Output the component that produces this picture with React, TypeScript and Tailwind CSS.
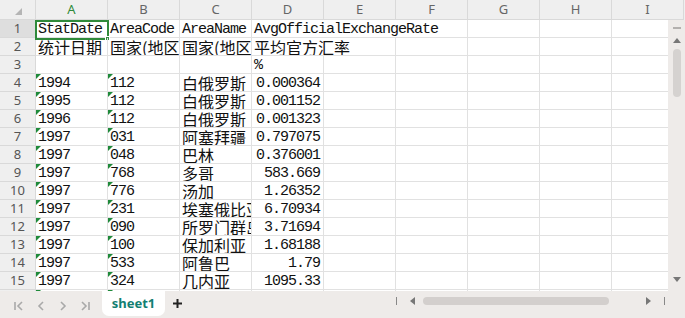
import React from "react";

type Cell = { v: string; zh?: boolean; num?: boolean; tri?: boolean; span?: 1 | 2 | 3 };

const COLS = ["A", "B", "C", "D", "E", "F", "G", "H", "I"];
const SPAN_W: Record<number, string> = { 1: "w-[72px]", 2: "w-[144px]", 3: "w-[216px]" };

const body: [string, string, string, string][] = [
  ["1994", "112", "白俄罗斯", "0.000364"],
  ["1995", "112", "白俄罗斯", "0.001152"],
  ["1996", "112", "白俄罗斯", "0.001323"],
  ["1997", "031", "阿塞拜疆", "0.797075"],
  ["1997", "048", "巴林", "0.376001"],
  ["1997", "768", "多哥", "583.669"],
  ["1997", "776", "汤加", "1.26352"],
  ["1997", "231", "埃塞俄比亚", "6.70934"],
  ["1997", "090", "所罗门群岛", "3.71694"],
  ["1997", "100", "保加利亚", "1.68188"],
  ["1997", "533", "阿鲁巴", "1.79"],
  ["1997", "324", "几内亚", "1095.33"],
  ["1997", "", "", ""],
];

const ROWS: Cell[][] = [
  [{ v: "StatDate" }, { v: "AreaCode" }, { v: "AreaName" }, { v: "AvgOfficialExchangeRate", span: 3 }],
  [
    { v: "统计日期", zh: true },
    { v: "国家(地区)代码", zh: true },
    { v: "国家(地区)名称", zh: true },
    { v: "平均官方汇率", zh: true, span: 2 },
  ],
  [{ v: "" }, { v: "" }, { v: "" }, { v: "%" }],
  ...body.map((r, i) =>
    i === 12
      ? [{ v: "", tri: true }, { v: "", tri: true }, { v: "" }, { v: "" }]
      : [
          { v: r[0], tri: true },
          { v: r[1], tri: true },
          { v: r[2], zh: true },
          { v: r[3], num: true },
        ]
  ),
];

function GridCell({ cell }: { cell: Cell }) {
  const w = SPAN_W[cell.span ?? 1];
  const font = cell.zh
    ? "text-[16px] leading-[17px] pt-[1px] font-['Noto_Sans_CJK_SC',sans-serif]"
    : "text-[15px] leading-[17px] pt-[1px] tracking-[-1px] font-['Liberation_Mono','Noto_Sans_CJK_SC',monospace]";
  return (
    <div
      className={`relative shrink-0 h-[18px] border-r border-b border-[#e1e1e1] overflow-hidden whitespace-nowrap text-[#111] ${w} ${font} ${
        cell.num ? "text-right pr-[3px]" : "pl-[2px]"
      }`}
    >
      {cell.tri && (
        <span className="absolute top-0 left-0 w-0 h-0 border-t-[5px] border-t-[#1f8a3a] border-r-[5px] border-r-transparent" />
      )}
      {cell.v}
    </div>
  );
}

function Row({ n, cells }: { n: number; cells: Cell[] }) {
  const out: React.ReactNode[] = [];
  let col = 0;
  cells.forEach((c, i) => {
    out.push(<GridCell key={i} cell={c} />);
    col += c.span ?? 1;
  });
  for (; col < COLS.length; col++) out.push(<GridCell key={"e" + col} cell={{ v: "" }} />);
  return (
    <div className="flex h-[18px]">
      <div
        className={`shrink-0 w-[36px] h-[18px] border-r border-b border-[#d9d9d9] flex items-center justify-center text-[13px] text-[#555] font-['Noto_Sans',sans-serif] ${
          n === 1 ? "bg-[#dedede]" : "bg-[#efefef]"
        }`}
      >
        {n}
      </div>
      {out}
      {n === 1 && (
        <div className="absolute left-[35px] top-[20px] w-[74px] h-[20px] border-2 border-[#2f8a3a] pointer-events-none">
          <span className="absolute -right-[3px] -bottom-[3px] w-[5px] h-[5px] bg-[#2f8a3a] border border-white" />
        </div>
      )}
    </div>
  );
}

function Tri({ dir }: { dir: "up" | "down" | "left" | "right" }) {
  const pts = {
    up: "0,6 4,1 8,6",
    down: "0,1 8,1 4,6",
    left: "6,0 6,8 1,4",
    right: "1,0 1,8 6,4",
  }[dir];
  return (
    <svg width="8" height="8" viewBox="0 0 8 8">
      <polygon points={pts} fill="#777" />
    </svg>
  );
}

function Nav({ d }: { d: string }) {
  return (
    <svg width="12" height="12" viewBox="0 0 12 12" fill="none" stroke="#a9a9a9" strokeWidth="1.6">
      <path d={d} />
    </svg>
  );
}

export default function App() {
  return (
    <div className="w-[685px] h-[318px] overflow-hidden bg-white flex flex-col select-none">
      <div className="relative h-[291px] overflow-hidden flex flex-col">
        {/* column headers */}
        <div className="flex h-[20px] shrink-0 bg-[#efefef]">
          <div className="relative shrink-0 w-[36px] h-[20px] border-r border-b border-[#d9d9d9]">
            <svg className="absolute left-[15px] top-[8px]" width="7" height="7" viewBox="0 0 7 7">
              <polygon points="7,0 7,7 0,7" fill="#b5b5b5" />
            </svg>
          </div>
          {COLS.map((c) => (
            <div
              key={c}
              className={`shrink-0 w-[72px] h-[20px] border-r border-b border-[#d9d9d9] flex items-center justify-center text-[13px] font-['Noto_Sans',sans-serif] ${
                c === "A" ? "text-[#2f8a3a]" : "text-[#666]"
              }`}
            >
              {c}
            </div>
          ))}
        </div>
        <div className="flex flex-1 min-h-0">
          <div className="w-[668px] overflow-hidden">
            {ROWS.map((r, i) => (
              <Row key={i} n={i + 1} cells={r} />
            ))}
          </div>
          {/* vertical scrollbar */}
          <div className="relative w-[17px] bg-[#eeebe9] flex flex-col items-center pt-[7px]">
            <span className="w-[8px] h-[2px] bg-[#b3b0ae]" />
            <div className="mt-[8px]">
              <Tri dir="up" />
            </div>
            <span className="mt-[4px] w-[8px] h-[48px] rounded-full bg-[#d5d2d0]" />
            <div className="absolute bottom-[7px]">
              <Tri dir="down" />
            </div>
          </div>
        </div>
      </div>

      {/* sheet tabs bar */}
      <div className="h-[27px] bg-[#eeebe9] flex items-start">
        <div className="flex items-center gap-[10px] pl-[13px] h-[22px] mt-[4px]">
          <Nav d="M2 2v8M9 2L5 6l4 4" />
          <Nav d="M8 2L4 6l4 4" />
          <Nav d="M4 2l4 4-4 4" />
          <Nav d="M3 2l4 4-4 4M10 2v8" />
        </div>
        <div className="ml-[11px] w-[63px] h-[25px] bg-white rounded-b-[7px] flex items-center justify-center text-[13px] font-bold text-[#137f72] font-['Noto_Sans',sans-serif]">
          sheet1
        </div>
        <div className="ml-[7px] h-[24px] flex items-center">
          <svg width="11" height="11" viewBox="0 0 11 11">
            <path d="M5.5 1v9M1 5.5h9" stroke="#222" strokeWidth="2" />
          </svg>
        </div>
        <div className="ml-auto w-[289px] h-[20px] flex items-center">
          <span className="w-px h-[8px] bg-[#888]" />
          <div className="ml-[12px]">
            <Tri dir="left" />
          </div>
          <span className="ml-[6px] w-[186px] h-[8px] rounded-full bg-[#d3cfcd]" />
          <div className="ml-[36px]">
            <Tri dir="right" />
          </div>
          <span className="ml-[11px] w-px h-[8px] bg-[#888]" />
        </div>
      </div>
    </div>
  );
}
